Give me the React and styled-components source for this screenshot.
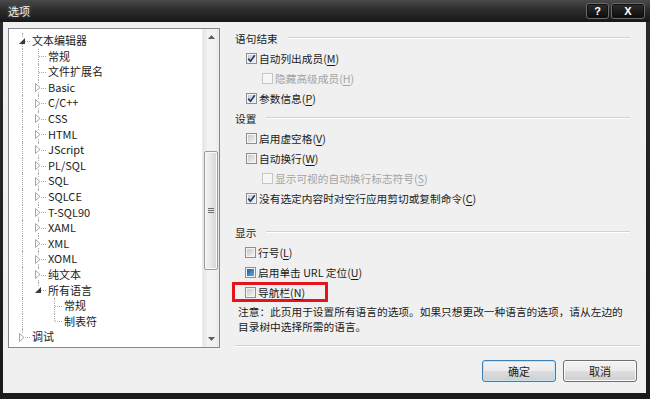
import React from "react";
import styled, { createGlobalStyle } from "styled-components";

const GlobalStyle = createGlobalStyle`
  html, body {
    margin: 0;
    padding: 0;
    background: #1c1c1c;
  }
  body {
    font-family: "Noto Sans CJK SC", "Microsoft YaHei", sans-serif;
    font-size: 10.7px;
    color: #1b1b1b;
  }
  u {
    text-decoration-thickness: 1px;
    text-underline-offset: 2px;
  }
`;

const Window = styled.div`
  width: 650px;
  height: 399px;
  display: flex;
  flex-direction: column;
  background: linear-gradient(#2b2b2b, #1a1a1a);
  overflow: hidden;
`;

const TitleBar = styled.div`
  height: 22px;
  flex: none;
  display: flex;
  align-items: flex-start;
  padding: 0 5px 0 8px;
  background: linear-gradient(#4a4a4a, #2c2c2c 45%, #171717);
`;

const Title = styled.span`
  color: #f2f2f2;
  font-size: 11px;
  line-height: 22px;
  text-shadow: 0 0 4px rgba(255, 255, 255, 0.35);
`;

const CaptionButtons = styled.div`
  margin-left: auto;
  margin-top: 3px;
  display: flex;
  gap: 2px;
`;

const CaptionButton = styled.div`
  width: ${(p) => p.$w}px;
  height: 16px;
  box-sizing: border-box;
  border: 1px solid #6a6a6a;
  border-radius: 3px;
  background: linear-gradient(#2e2e2e, #0c0c0c);
  box-shadow: inset 0 0 0 1px #111;
  color: #fff;
  font-family: "Liberation Sans", Arial, sans-serif;
  font-weight: bold;
  font-size: 11px;
  display: flex;
  align-items: center;
  justify-content: center;
`;

const Body = styled.div`
  flex: 1;
  margin: 0 4px 6px 3px;
  background: #f0f0f0;
  display: flex;
  gap: 13px;
  padding: 6px 6px 0 5px;
`;

const TreeBox = styled.div`
  width: 212px;
  height: 320px;
  flex: none;
  box-sizing: border-box;
  border: 1px solid #828790;
  background: #fff;
  display: flex;
`;

const TreeList = styled.div`
  flex: 1;
  padding: 4px 0 0 6px;
  overflow: hidden;
`;

const TreeRow = styled.div`
  display: flex;
  height: 15.6px;
  line-height: 15.6px;
  white-space: nowrap;
`;

const Cell = styled.span`
  position: relative;
  flex: none;
  width: 16px;
  display: flex;
  align-items: center;
  justify-content: center;
  &::before {
    content: "";
    display: ${(p) => (p.$line ? "block" : "none")};
    position: absolute;
    left: 7px;
    top: 0;
    height: ${(p) => (p.$line === "half" ? "50%" : "100%")};
    border-left: 1px dotted #a9a9a9;
  }
  &::after {
    content: "";
    display: ${(p) => (p.$branch ? "block" : "none")};
    position: absolute;
    left: 8px;
    right: 1px;
    top: 50%;
    border-top: 1px dotted #a9a9a9;
  }
  svg {
    position: relative;
    z-index: 1;
    background: #fff;
    margin-right: 2px;
  }
`;

const Label = styled.span`
  padding-left: 1px;
  font-size: 11px;
`;

const Scrollbar = styled.div`
  width: 16px;
  flex: none;
  display: flex;
  flex-direction: column;
  background: linear-gradient(to right, #e6e6e6, #f2f2f2 30%, #f2f2f2 70%, #e9e9e9);
  border-left: 1px solid #ececec;
`;

const ScrollArrow = styled.div`
  height: 16px;
  flex: none;
  display: flex;
  align-items: center;
  justify-content: center;
`;

const ScrollTrack = styled.div`
  flex: 1;
  padding-top: 106px;
  box-sizing: border-box;
`;

const Thumb = styled.div`
  height: 119px;
  margin: 0 1px;
  box-sizing: border-box;
  border: 1px solid #9a9a9a;
  border-radius: 2px;
  background: linear-gradient(to right, #f3f3f3, #e6e6e6 50%, #d4d4d4);
  box-shadow: inset 0 0 0 1px #fafafa;
  display: flex;
  align-items: center;
  justify-content: center;
`;

const Grip = styled.span`
  width: 6px;
  height: 5px;
  background: repeating-linear-gradient(#6f6f6f 0 1px, transparent 1px 2px);
`;

const Options = styled.div`
  flex: 1;
  min-width: 0;
  display: flex;
  flex-direction: column;
`;

const Header = styled.div`
  display: flex;
  align-items: center;
  height: 20px;
  padding-left: 2px;
  margin-top: ${(p) => p.$gap || 0}px;
  &::after {
    content: "";
    flex: 1;
    margin: 0 10px;
    border-top: 1px solid #d2d2d2;
    border-bottom: 1px solid #fff;
  }
`;

const OptionRow = styled.div`
  display: flex;
  align-items: center;
  height: 20px;
  padding-left: ${(p) => p.$indent}px;
  gap: 2px;
  white-space: nowrap;
  color: ${(p) => (p.$disabled ? "#a4a4a4" : "#1b1b1b")};
`;

const Highlight = styled.div`
  align-self: flex-start;
  display: flex;
  align-items: center;
  gap: 2px;
  height: 20px;
  box-sizing: border-box;
  margin-left: -1px;
  padding: 0 20px 0 10px;
  border: 3px solid #e3141b;
  white-space: nowrap;
`;

const Box = styled.span`
  width: 11px;
  height: 11px;
  flex: none;
  box-sizing: border-box;
  border: 1px solid ${(p) => (p.$disabled ? "#c4c4c4" : "#8e8f8f")};
  background: ${(p) =>
    p.$disabled ? "#f5f5f5" : "linear-gradient(135deg, #c4c4c4, #ededed 80%)"};
  box-shadow: inset 0 0 0 1px ${(p) => (p.$disabled ? "#f8f8f8" : "#f4f4f4")};
  display: flex;
  align-items: center;
  justify-content: center;
`;

const Fill = styled.span`
  width: 7px;
  height: 7px;
  background: linear-gradient(135deg, #1b5fa5, #5ca7e0);
`;

const Note = styled.div`
  padding-left: 5px;
  margin-top: 2px;
  line-height: 15px;
  white-space: nowrap;
`;

const Separator = styled.div`
  margin-top: auto;
  margin-left: 2px;
  border-top: 1px solid #d2d2d2;
  border-bottom: 1px solid #fff;
`;

const ButtonRow = styled.div`
  display: flex;
  justify-content: flex-end;
  gap: 7px;
  margin: 13px 3px 11px 0;
`;

const DialogButton = styled.button`
  width: 74px;
  height: 22px;
  box-sizing: border-box;
  border: 1px solid ${(p) => (p.$primary ? "#3c7fb1" : "#707070")};
  border-radius: 3px;
  background: linear-gradient(#f3f3f3, #ebebeb 50%, #dddddd 51%, #cfcfcf);
  box-shadow: inset 0 0 0 1px ${(p) => (p.$primary ? "#bfe4f6" : "#fbfbfb")};
  font-family: inherit;
  font-size: 11px;
  color: #1b1b1b;
  padding: 0;
`;

const Collapsed = () => (
  <svg width="6" height="9" viewBox="0 0 6 9">
    <polygon points="0.5,0.5 5,4.5 0.5,8.5" fill="#fff" stroke="#a6a6a6" />
  </svg>
);

const Expanded = () => (
  <svg width="6" height="6" viewBox="0 0 6 6">
    <polygon points="6,0 6,6 0,6" fill="#3a3a3a" />
  </svg>
);

const Check = () => (
  <svg width="9" height="9" viewBox="0 0 9 9">
    <path d="M1.3 4.6 L3.5 7.2 L7.8 1.2" fill="none" stroke="#1e3a7a" strokeWidth="1.7" />
  </svg>
);

const langs = ["Basic", "C/C++", "CSS", "HTML", "JScript", "PL/SQL", "SQL", "SQLCE", "T-SQL90", "XAML", "XML", "XOML", "纯文本"];

const tree = [
  { label: "文本编辑器", guides: [], toggle: "open", more: true },
  { label: "常规", guides: [true], more: true },
  { label: "文件扩展名", guides: [true], more: true },
  ...langs.map((label) => ({ label, guides: [true], toggle: "closed", more: true })),
  { label: "所有语言", guides: [true], toggle: "open", more: false },
  { label: "常规", guides: [true, false], more: true },
  { label: "制表符", guides: [true, false], more: false },
  { label: "调试", guides: [], toggle: "closed", more: false },
];

const TreeItem = ({ item }) => (
  <TreeRow>
    {item.guides.map((g, i) => (
      <Cell key={i} $line={g} />
    ))}
    <Cell $line={item.more ? "full" : "half"} $branch>
      {item.toggle === "open" && <Expanded />}
      {item.toggle === "closed" && <Collapsed />}
    </Cell>
    <Label>{item.label}</Label>
  </TreeRow>
);

const CheckBox = ({ state, disabled }) => (
  <Box $disabled={disabled}>
    {state === "checked" && <Check />}
    {state === "filled" && <Fill />}
  </Box>
);

const Option = ({ text, hotkey, state, indent = 13, disabled }) => (
  <OptionRow $indent={indent} $disabled={disabled}>
    <CheckBox state={state} disabled={disabled} />
    <span>
      {text}(<u>{hotkey}</u>)
    </span>
  </OptionRow>
);

export default function App() {
  return (
    <>
      <GlobalStyle />
      <Window>
        <TitleBar>
          <Title>选项</Title>
          <CaptionButtons>
            <CaptionButton $w={23}>?</CaptionButton>
            <CaptionButton $w={34}>X</CaptionButton>
          </CaptionButtons>
        </TitleBar>
        <Body>
          <TreeBox>
            <TreeList>
              {tree.map((item, i) => (
                <TreeItem key={i} item={item} />
              ))}
            </TreeList>
            <Scrollbar>
              <ScrollArrow>
                <svg width="7" height="4" viewBox="0 0 7 4">
                  <polygon points="3.5,0 7,4 0,4" fill="#5f5f5f" />
                </svg>
              </ScrollArrow>
              <ScrollTrack>
                <Thumb>
                  <Grip />
                </Thumb>
              </ScrollTrack>
              <ScrollArrow>
                <svg width="7" height="4" viewBox="0 0 7 4">
                  <polygon points="0,0 7,0 3.5,4" fill="#5f5f5f" />
                </svg>
              </ScrollArrow>
            </Scrollbar>
          </TreeBox>
          <Options>
            <Header>语句结束</Header>
            <Option text="自动列出成员" hotkey="M" state="checked" />
            <Option text="隐藏高级成员" hotkey="H" indent={29} disabled />
            <Option text="参数信息" hotkey="P" state="checked" />
            <Header>设置</Header>
            <Option text="启用虚空格" hotkey="V" />
            <Option text="自动换行" hotkey="W" />
            <Option text="显示可视的自动换行标志符号" hotkey="S" indent={29} disabled />
            <Option text="没有选定内容时对空行应用剪切或复制命令" hotkey="C" state="checked" />
            <Header $gap={14}>显示</Header>
            <Option text="行号" hotkey="L" indent={12} />
            <Option text="启用单击 URL 定位" hotkey="U" indent={12} state="filled" />
            <Highlight>
              <CheckBox />
              <span>
                导航栏(<u>N</u>)
              </span>
            </Highlight>
            <Note>
              注意：此页用于设置所有语言的选项。如果只想更改一种语言的选项，请从左边的
              <br />
              目录树中选择所需的语言。
            </Note>
            <Separator />
            <ButtonRow>
              <DialogButton $primary>确定</DialogButton>
              <DialogButton>取消</DialogButton>
            </ButtonRow>
          </Options>
        </Body>
      </Window>
    </>
  );
}
